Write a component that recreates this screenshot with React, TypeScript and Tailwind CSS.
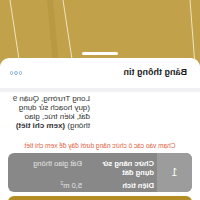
export default function App() {
  return (
    <div className="h-[200px] w-[200px] overflow-hidden bg-white font-['Liberation_Sans',Arial,sans-serif] -scale-x-100">
      <div className="relative h-[66px] bg-[#c1a14a]">
        <svg width="200" height="66" viewBox="0 0 200 66" className="absolute left-0 top-0">
          <polygon points="147,0 153,0 147,66 141,66" fill="#b59440" opacity="0.6" />
          <line x1="190" y1="0" x2="180" y2="66" stroke="#f4ead0" strokeWidth="0.9" />
          <line x1="137" y1="0" x2="127" y2="66" stroke="#f4ead0" strokeWidth="0.9" />
          <line x1="10" y1="0" x2="5" y2="66" stroke="#f4ead0" strokeWidth="0.9" />
        </svg>
        <div className="absolute left-[82px] top-[52px] h-[2.5px] w-[36px] rounded-full bg-white" />
      </div>
      <div className="relative -mt-[8px] rounded-t-[9px] bg-white">
        <div className="flex h-[30px] items-center justify-between pl-[13px] pr-[10px]">
          <span className="text-[9px] font-bold text-[#1c1c1e]">Bảng thông tin</span>
          <span className="flex gap-[1px]">
            <span className="h-[3.5px] w-[3.5px] rounded-full border border-[#8db4d9]" />
            <span className="h-[3.5px] w-[3.5px] rounded-full border border-[#8db4d9]" />
            <span className="h-[3.5px] w-[3.5px] rounded-full border border-[#8db4d9]" />
          </span>
        </div>
        <div className="h-[4px] bg-[#f1f1f4]" />
        <div className="pl-[110px] pt-[1.5px] text-[8px] leading-[9px] text-[#333]">
          <div>Long Trường, Quận 9</div>
          <div>(quy hoạch sử dụng</div>
          <div>đất, kiến trúc, giao</div>
          <div>
            thông) <span className="font-bold">(xem chi tiết)</span>
          </div>
        </div>
        <div className="mt-[12.5px] text-center text-[6.5px] leading-[8px] text-[#e2603f]">
          Chạm vào các ô chức năng dưới đây để xem chi tiết
        </div>
        <div className="mx-[8px] mt-[3px] flex h-[39px] overflow-hidden rounded-[6px] bg-[#888888]">
          <div className="flex w-[35px] items-center justify-center bg-[#9c9c9c] text-[10px] text-white">1</div>
          <div className="flex-1 pl-[3px] pt-[5.5px] text-[7.5px] leading-[9px]">
            <div className="flex">
              <div className="w-[72px] font-bold text-white">
                Chức năng sử
                <br />
                dụng đất
              </div>
              <div className="text-[#e4e4e4]">Đất giao thông</div>
            </div>
            <div className="mt-[4px] flex">
              <div className="w-[72px] font-bold text-white">Diện tích</div>
              <div className="text-[#e4e4e4]">
                5,0 m<sup className="text-[5px]">2</sup>
              </div>
            </div>
          </div>
        </div>
        <div className="mx-[8px] mt-[4px] h-[20px] rounded-t-[6px] bg-[#b48d22]" />
      </div>
    </div>
  );
}
